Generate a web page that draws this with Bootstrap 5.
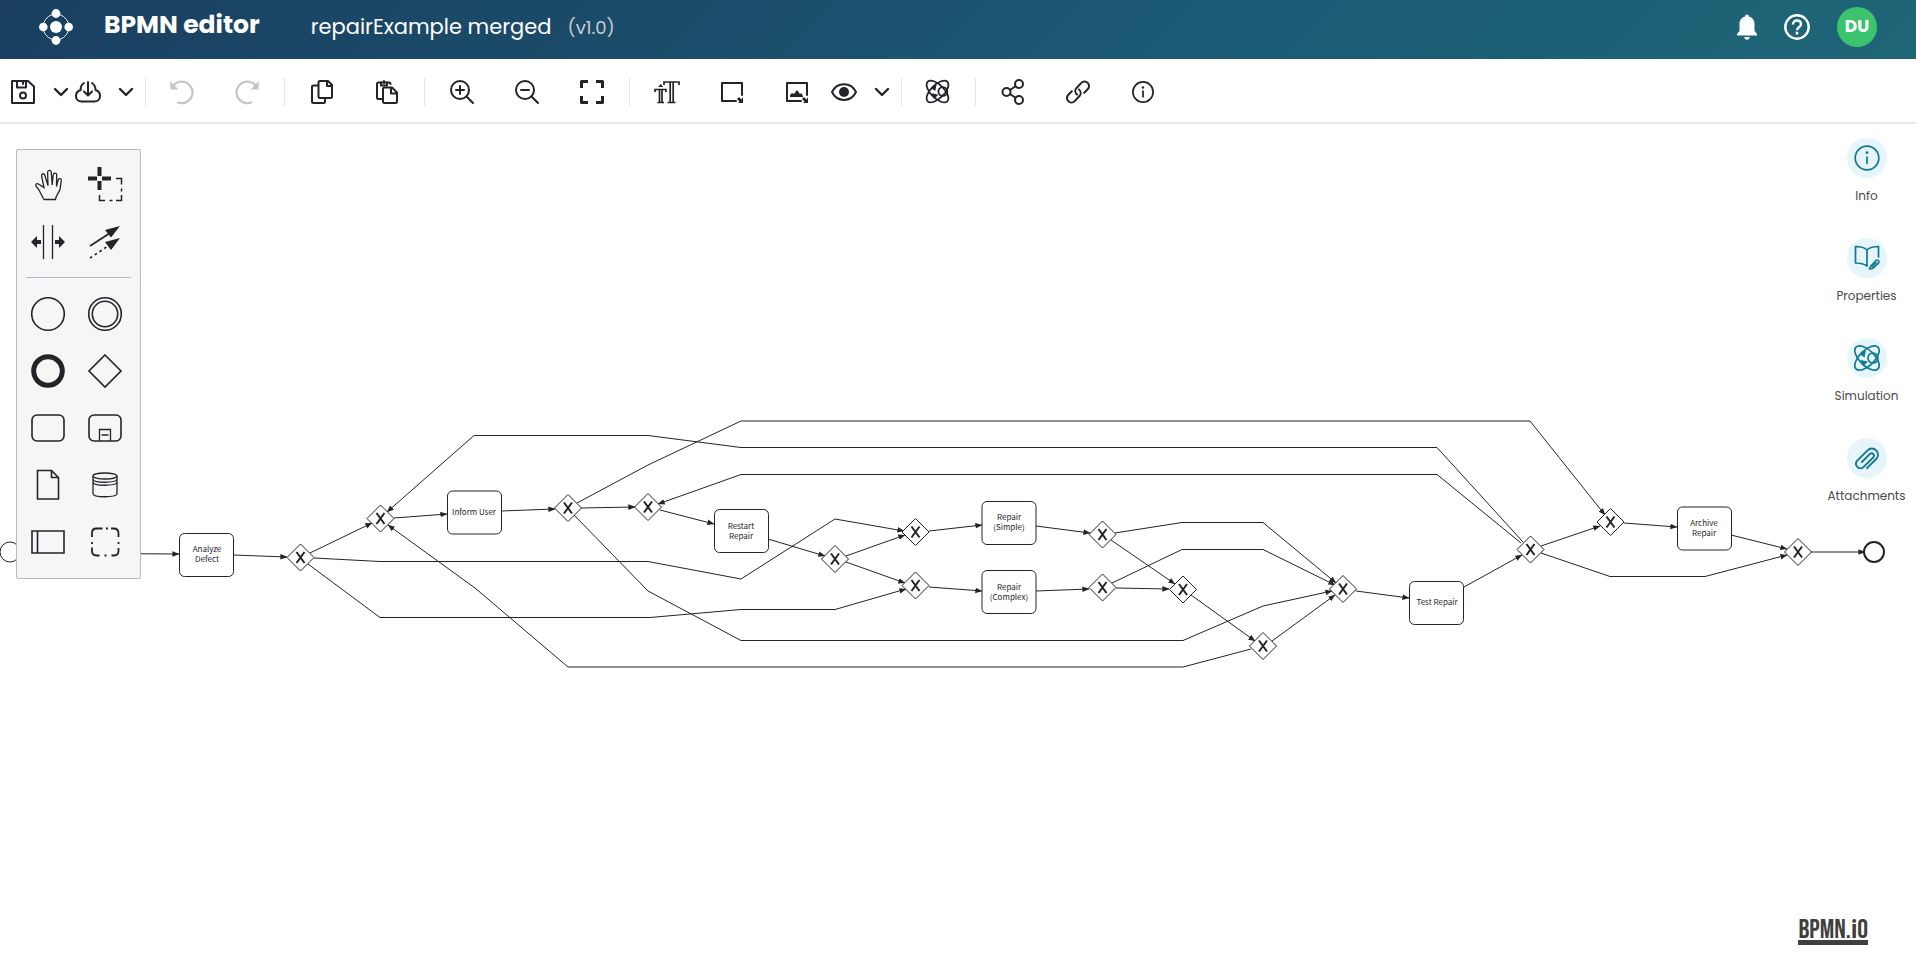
<!DOCTYPE html>
<html lang="en">
<head>
<meta charset="utf-8">
<meta name="viewport" content="width=device-width, initial-scale=1">
<title>BPMN editor</title>
<link href="https://cdn.jsdelivr.net/npm/bootstrap@5.3.0/dist/css/bootstrap.min.css" rel="stylesheet">
<style>
  :root { --ink: #22242a; --teal: #117893; --teal-soft: #e5f5f9; }
  body { font-family: Poppins, "Open Sans", sans-serif; color: var(--ink); background: #fff; }
  svg { display: block; }
  button svg, .brand-logo, .side-icon svg { fill: none; stroke: currentColor; stroke-width: 2; stroke-linecap: round; stroke-linejoin: round; }
  .side-icon svg { stroke-width: 1.7; }
  .solid { fill: currentColor; stroke: none; }

  .app-header { height: 59px; padding: 0 39px 5px; background: linear-gradient(135deg, #1a3f60 0%, #1b4c6a 33%, #1b5974 62%, #1f6677 100%); color: #fff; }
  .brand-name { font-size: 25px; line-height: 32px; font-weight: 700; margin: 0 51px 5px 31px; }
  .doc-name { font-size: 21px; line-height: 32px; }
  .doc-version { font-size: 18px; color: #c5ccd2; margin-left: 16px; }
  .plain-btn { border: 0; background: none; color: inherit; padding: 0; }
  .avatar { width: 40px; height: 40px; background: #3bc36d; color: #fff; font-size: 17px; font-weight: 700; margin-left: 26px; }

  .toolbar { height: 65px; padding: 2px 0 0 8px; border-bottom: 2px solid #e9e9ea; }
  .tool { width: 65px; height: 48px; display: flex; align-items: center; justify-content: center; }
  .split { margin-left: 2px; gap: 13px; }
  .split button { width: 26px; height: 48px; display: flex; align-items: center; justify-content: center; }
  .split button + button { width: 24px; }
  .tool-sep { width: 1px; height: 28px; background: #e3e4e6; margin: 0 4px 0 5px; }
  .split + .tool-sep { margin: 0 3px 0 7px; }
  button:disabled { color: #c4c4c5; }

  .canvas { overflow: hidden; min-height: 600px; }
  .diagram { width: 100%; height: 100%; position: absolute; inset: 0; }
  .flow { fill: none; stroke: var(--ink); stroke-width: 1; marker-end: url(#arrow); }
  .task rect { fill: #fff; stroke: var(--ink); stroke-width: 1; }
  .task text { font: 8px "Noto Sans CJK SC", "Noto Sans", sans-serif; text-anchor: middle; fill: var(--ink); }

  .palette { position: absolute; left: 16px; top: 25px; width: 125px; padding: 6px 7px 8px 2px; background: #f6f6f7; border: 1px solid #b8b9cb; border-radius: 2px; }
  .palette-grid { display: grid; grid-template-columns: 1fr 1fr; }
  .palette-grid button { height: 57px; display: flex; align-items: center; justify-content: center; }
  .palette-grid svg { stroke-width: 1.3; stroke-linecap: butt; stroke-linejoin: miter; }
  .palette-sep { height: 1px; background: #b8b9cb; margin: 7px 2px 7px 7px; }

  .side-panel { position: absolute; right: 0; top: 14px; width: 99px; gap: 32px; }
  .side-item { color: #4a4a4a; font-size: 12px; line-height: 20px; height: 68px; text-decoration: none; }
  .side-icon { width: 40px; height: 40px; background: var(--teal-soft); color: var(--teal); margin-bottom: 8px; }
  .bpmn-logo { position: absolute; right: 48px; bottom: 18px; color: #404040; font: 400 27px/20px "Bebas Neue", Oswald, "Roboto Condensed", "Liberation Sans", sans-serif; border-bottom: 5px solid #404040; text-decoration: none; }
  .bpmn-logo span { font-family: "Roboto Condensed", Oswald, "Liberation Sans", sans-serif; font-weight: 700; font-size: 25px; }
</style>
</head>
<body class="vh-100 d-flex flex-column">

<svg width="0" height="0" class="position-absolute" aria-hidden="true">
  <defs>
    <symbol id="i-chevron" viewBox="0 0 24 24"><path d="M6 9l6 6 6-6" stroke-width="2.4"/></symbol>
    <symbol id="i-sim" viewBox="0 0 28 28">
      <ellipse cx="14" cy="14" rx="15.500" ry="7.500" transform="rotate(45 14 14)"/>
      <ellipse cx="14" cy="14" rx="15.500" ry="7.500" transform="rotate(-45 14 14)"/>
      <circle cx="20" cy="14" r="5"/>
      <path class="solid" d="M13 6l-1.500 7.500-5-3.500zM7.500 16l7.500 1.500-5 5z"/>
    </symbol>
    <symbol id="i-info" viewBox="0 0 28 28"><circle cx="14" cy="14" r="11.800"/><path d="M14 13v6.500"/><circle class="solid" cx="14" cy="8.700" r="1.400"/></symbol>
  </defs>
</svg>

<header class="app-header d-flex align-items-center flex-shrink-0">
  <svg class="brand-logo" width="34" height="36" viewBox="0 0 34 36" aria-hidden="true">
    <circle cx="17" cy="18" r="13" stroke-width=".9" stroke-dasharray="16 4.400"/>
    <g class="solid"><circle cx="17" cy="18" r="6"/><circle cx="17" cy="4.500" r="4.400"/><circle cx="17" cy="31.500" r="4.400"/><circle cx="4.300" cy="18" r="4.300"/><circle cx="29.700" cy="18" r="4.300"/></g>
  </svg>
  <h1 class="brand-name">BPMN editor</h1>
  <span class="doc-name">repairExample merged</span>
  <span class="doc-version">(v1.0)</span>
  <button class="plain-btn ms-auto" aria-label="Notifications">
    <svg width="24" height="28" viewBox="0 0 24 28"><path class="solid" d="M12 1.500c1.200 0 1.900.8 1.900 2 3.600.9 5.600 3.700 5.600 7.500v7l2.500 3v1.500H2V21l2.500-3v-7c0-3.800 2-6.600 5.600-7.500 0-1.200.7-2 1.900-2zM9.300 24h5.400c0 1.600-1.100 2.700-2.700 2.700S9.300 25.600 9.300 24z"/></svg>
  </button>
  <button class="plain-btn ms-4" aria-label="Help">
    <svg width="28" height="28" viewBox="0 0 28 28"><circle cx="14" cy="14" r="11.700" stroke-width="2.400"/><path d="M10 11.500c0-2.400 1.700-4 4-4s4 1.500 4 3.700c0 3-4 3-4 6" stroke-width="2.400" stroke-linecap="butt"/><path class="solid" d="M12.700 18.800h2.600v2.600h-2.600z"/></svg>
  </button>
  <button class="plain-btn avatar rounded-circle" aria-label="Account">DU</button>
</header>

<nav class="toolbar d-flex align-items-center flex-shrink-0" aria-label="Editor tools">
  <div class="split d-flex">
    <button class="plain-btn" aria-label="Save"><svg width="26" height="26" viewBox="0 0 26 26"><path d="M3 2h15l6 5.500V24H2V2z"/><path d="M7 2v6.500h9V2M13 2v3"/><circle cx="13" cy="16.500" r="3"/></svg></button>
    <button class="plain-btn" aria-label="Save options"><svg width="24" height="24"><use href="#i-chevron"/></svg></button>
  </div>
  <div class="split d-flex">
    <button class="plain-btn" aria-label="Download"><svg width="26" height="26" viewBox="0 0 26 26"><path d="M9 4C6.500 5.500 5.500 8 5.700 11 2.500 12 1 14.500 1 17c0 3.500 2.500 5.500 5.500 5.500h13c3 0 5.500-2 5.500-5.500 0-3-2-5.200-4.500-6 0-3-1-5.500-3.500-7M13 3v13M9 12.500l4 4 4-4"/></svg></button>
    <button class="plain-btn" aria-label="Download options"><svg width="24" height="24"><use href="#i-chevron"/></svg></button>
  </div>
  <div class="tool-sep"></div>
  <button class="plain-btn tool" aria-label="Undo" disabled><svg width="26" height="26" viewBox="0 0 26 26"><path d="M4 7a10.800 10.800 0 1 1 5 16.500" stroke-width="2.200"/><path class="solid" d="M1 2l.5 8.500H9.500z"/></svg></button>
  <button class="plain-btn tool" aria-label="Redo" disabled><svg width="26" height="26" viewBox="0 0 26 26"><path d="M22 7a10.800 10.800 0 1 0-5 16.500" stroke-width="2.200"/><path class="solid" d="M25 2l-.5 8.500H16.500z"/></svg></button>
  <div class="tool-sep"></div>
  <button class="plain-btn tool" aria-label="Copy"><svg width="24" height="26" viewBox="0 0 24 26"><path d="M10 2h8l4 4v11.500q0 1.500-1.500 1.500H10q-1.500 0-1.500-1.500v-14Q8.500 2 10 2zM17 2v5h5"/><path d="M8 6.500H3.500Q2 6.500 2 8v14.500Q2 24 3.500 24h10q1.500 0 1.500-1.500V20"/></svg></button>
  <button class="plain-btn tool" aria-label="Paste"><svg width="24" height="26" viewBox="0 0 24 26"><path d="M8 20H3.500Q2 20 2 18.500V5q0-1.500 1.500-1.500H14Q15.500 3.500 15.500 5"/><path d="M6 3.500V6.500h6V3.500M9 2v2"/><path d="M9.500 8.500h7.500l5 5v9q0 1.500-1.500 1.500h-11Q8 24 8 22.500V10q0-1.500 1.500-1.500zM16 9v5.500h6"/></svg></button>
  <div class="tool-sep"></div>
  <button class="plain-btn tool" aria-label="Zoom in"><svg width="26" height="26" viewBox="0 0 26 26"><circle cx="11" cy="11" r="9"/><path d="M17.500 17.500l6.500 6.500M11 7v8M7 11h8"/></svg></button>
  <button class="plain-btn tool" aria-label="Zoom out"><svg width="26" height="26" viewBox="0 0 26 26"><circle cx="11" cy="11" r="9"/><path d="M17.500 17.500l6.500 6.500M7 11h8"/></svg></button>
  <button class="plain-btn tool" aria-label="Fit to screen"><svg width="26" height="26" viewBox="0 0 26 26"><path d="M2.500 9v-6.500H9M17 2.500h6.500V9M23.500 17v6.500H17M9 23.500H2.500V17" stroke-width="3" stroke-linecap="butt"/></svg></button>
  <div class="tool-sep"></div>
  <button class="plain-btn tool" aria-label="Font size"><svg width="28" height="26" viewBox="0 0 28 26"><g stroke-width="1.700" stroke-linecap="butt" stroke-linejoin="miter"><path d="M11 6V3h15v3M17.200 3v20M20.200 3v20M14.500 23.500h8"/><path d="M2 13v-2.500h11V13M6.500 10.500v13M9 10.500v13M4.500 23.500h6.500"/></g><path class="solid" d="M7.700 5l2.500 3h-5z"/></svg></button>
  <button class="plain-btn tool" aria-label="Box colour"><svg width="26" height="26" viewBox="0 0 26 26"><path d="M17 22H3V4h20v12"/><path class="solid" d="M24 18v6h-5l1.500-1.500L18 20l2-2 2.500 2.500z"/></svg></button>
  <button class="plain-btn tool" aria-label="Box image"><svg width="26" height="26" viewBox="0 0 26 26"><path d="M17 22H3V4h20v12"/><path class="solid" d="M24 18v6h-5l1.500-1.500L18 20l2-2 2.500 2.500zM6 18v-2l2-2 2 1 3-4 3 4 1-1 2 3v1z"/></svg></button>
  <div class="split d-flex">
    <button class="plain-btn" aria-label="View"><svg width="26" height="26" viewBox="0 0 26 26"><path d="M1 13C6 2.500 20 2.500 25 13 20 23.500 6 23.500 1 13z"/><circle class="solid" cx="13" cy="13" r="5"/></svg></button>
    <button class="plain-btn" aria-label="View options"><svg width="24" height="24"><use href="#i-chevron"/></svg></button>
  </div>
  <div class="tool-sep"></div>
  <button class="plain-btn tool" aria-label="Simulate"><svg width="25" height="25"><use href="#i-sim"/></svg></button>
  <div class="tool-sep"></div>
  <button class="plain-btn tool" aria-label="Share"><svg width="24" height="26" viewBox="0 0 24 26"><circle cx="5.500" cy="13" r="4"/><circle cx="18" cy="5" r="4"/><circle cx="18" cy="21" r="4"/><path d="M9 11l5.500-3.800M9 15l5.500 3.800"/></svg></button>
  <button class="plain-btn tool" aria-label="Link"><svg width="24" height="24" viewBox="0 0 24 24"><path d="M11 14.500a4.500 4.500 0 0 1-.7-6.300l5-5.300a4.500 4.500 0 0 1 6.400 6.400l-3.500 3.500"/><path d="M13 9.500a4.500 4.500 0 0 1 .7 6.300l-5 5.300a4.500 4.500 0 0 1-6.400-6.400l3.500-3.500"/></svg></button>
  <button class="plain-btn tool" aria-label="Information"><svg width="24" height="24"><use href="#i-info"/></svg></button>
</nav>

<main class="canvas position-relative flex-fill">
  <svg class="diagram" role="img" aria-label="Repair process">
    <defs>
      <marker id="arrow" viewBox="0 0 10 10" refX="9.500" refY="5" markerWidth="7" markerHeight="7" orient="auto"><path d="M0 1L10 5 0 9z" fill="#22242a"/></marker>
      <g id="gate"><path d="M0-13.500L13.500 0 0 13.500-13.500 0z" fill="#fff" stroke="#22242a"/><path d="M-4-5.500L4 5.500M4-5.500L-4 5.500" stroke="#22242a" stroke-width="2"/></g>
    </defs>
    <g transform="translate(0 -124)">
      <g>
        <path class="flow" d="M20 553L179 554"/>
        <path class="flow" d="M233 555L287 557"/>
        <path class="flow" d="M310 553L372 523"/>
        <path class="flow" d="M314 558L380 561.500H648L741 579 835 519 904 531"/>
        <path class="flow" d="M308 564L380 617.500H650L741 609.500H835L906 589"/>
        <path class="flow" d="M394 518L447 514"/>
        <path class="flow" d="M501 511L555 509"/>
        <path class="flow" d="M1523 542L1437 447.500H741L648 435.500H474L387 512"/>
        <path class="flow" d="M577 503L648 465 741 421H1530L1605 515"/>
        <path class="flow" d="M581 508L635 507"/>
        <path class="flow" d="M1521 543L1437 474.500H741L658 504"/>
        <path class="flow" d="M660 510L714 524"/>
        <path class="flow" d="M768 539L825 556"/>
        <path class="flow" d="M846 556L905 535"/>
        <path class="flow" d="M846 562L905 583"/>
        <path class="flow" d="M929 531L982 525"/>
        <path class="flow" d="M929 587L982 591"/>
        <path class="flow" d="M1036 526L1090 533"/>
        <path class="flow" d="M1036 591L1089 589"/>
        <path class="flow" d="M1115 533L1182 522.500H1263L1336 583"/>
        <path class="flow" d="M1111 540L1175 584"/>
        <path class="flow" d="M1112 583L1182 549.500H1263L1335 585"/>
        <path class="flow" d="M1116 588L1169 589"/>
        <path class="flow" d="M1191 595L1255 641"/>
        <path class="flow" d="M574 515L648 591 741 640.500H1183L1263 606 1332 591"/>
        <path class="flow" d="M1251 649L1183 667H568L475 588 388 525"/>
        <path class="flow" d="M1272 641L1335 595"/>
        <path class="flow" d="M1356 591L1409 598"/>
        <path class="flow" d="M1464 587L1522 555"/>
        <path class="flow" d="M1541 546L1600 526"/>
        <path class="flow" d="M1541 553L1610 576.500H1705L1787 555"/>
        <path class="flow" d="M1624 523L1677 527"/>
        <path class="flow" d="M1731 535L1787 549"/>
        <path class="flow" d="M1811 552H1865"/>
      </g>
      <circle cx="10" cy="552" r="10" fill="#fff" stroke="#22242a"/>
      <circle cx="1874" cy="552" r="10" fill="#fff" stroke="#22242a" stroke-width="2"/>
      <use href="#gate" x="300.500" y="557.500"/><use href="#gate" x="380.500" y="518.500"/><use href="#gate" x="568" y="508"/>
      <use href="#gate" x="648" y="507"/><use href="#gate" x="835" y="559"/><use href="#gate" x="915.500" y="532"/>
      <use href="#gate" x="915.500" y="585.500"/><use href="#gate" x="1102.500" y="534.500"/><use href="#gate" x="1102.500" y="587.500"/>
      <use href="#gate" x="1183" y="589.500"/><use href="#gate" x="1263" y="646"/><use href="#gate" x="1343" y="589"/>
      <use href="#gate" x="1530.500" y="549.500"/><use href="#gate" x="1610.500" y="522"/><use href="#gate" x="1798" y="552"/>
      <g class="task"><rect x="179.500" y="533.500" width="54" height="43" rx="5"/><text x="207" y="552">Analyze</text><text x="207" y="562">Defect</text></g>
      <g class="task"><rect x="447.500" y="491" width="54" height="43" rx="5"/><text x="474" y="515">Inform User</text></g>
      <g class="task"><rect x="714.500" y="509.500" width="54" height="43" rx="5"/><text x="741" y="529">Restart</text><text x="741" y="539">Repair</text></g>
      <g class="task"><rect x="982" y="501.500" width="54" height="43" rx="5"/><text x="1009" y="520">Repair</text><text x="1009" y="530">(Simple)</text></g>
      <g class="task"><rect x="982" y="570.500" width="54" height="43" rx="5"/><text x="1009" y="590">Repair</text><text x="1009" y="600">(Complex)</text></g>
      <g class="task"><rect x="1409.500" y="581.500" width="54" height="43" rx="5"/><text x="1437" y="605">Test Repair</text></g>
      <g class="task"><rect x="1677.500" y="507" width="54" height="43" rx="5"/><text x="1704" y="526">Archive</text><text x="1704" y="536">Repair</text></g>
    </g>
  </svg>

  <aside class="palette" aria-label="Shape palette">
    <div class="palette-grid">
      <button class="plain-btn" aria-label="Hand tool"><svg width="36" height="36" viewBox="0 0 36 36"><path d="M14 32.500h11.500c.3-4 3-6 4.500-10l1.300-9c.2-2-2.600-2.600-3.200-.5l-1.600 6.500.2-11.500c0-2.400-3.200-2.400-3.500 0l-1 10-1-13c-.3-2.400-3.600-2.200-3.600.2l.4 13.300-3.300-10.500c-.8-2.200-3.600-1.300-3.100 1l2.400 11.500-5.500-3.500c-2-1.200-3.600.8-2.200 2.500 3.700 3.500 4.700 8.500 7.700 13z"/></svg></button>
      <button class="plain-btn" aria-label="Lasso tool"><svg width="36" height="36" viewBox="0 0 36 36"><path d="M12.500 0v9M12.500 14v9M1 11.500h9M15 11.500h9" stroke-width="4"/><path d="M29 11.500h5.500v6M34.500 21.500v3M34.500 28v5.500H29M25.500 33.500h-3M18 33.500h-5.500V28" stroke-width="1.500"/></svg></button>
      <button class="plain-btn" aria-label="Space tool"><svg width="36" height="36" viewBox="0 0 36 36"><path d="M13.500 1v34M22.500 1v34"/><path class="solid" d="M1 18l6-6v4h4v4H7v4zM35 18l-6-6v4h-4v4h4v4z"/></svg></button>
      <button class="plain-btn" aria-label="Connect tool"><svg width="36" height="36" viewBox="0 0 36 36"><path d="M3 22l20-13" stroke-width="1.700"/><path d="M3 34l18-12" stroke-width="1.700" stroke-dasharray="2.500 3.200"/><path class="solid" d="M33 2L18 6l6 7.500zM33 14l-15 4 6 8z"/></svg></button>
    </div>
    <div class="palette-sep"></div>
    <div class="palette-grid">
      <button class="plain-btn" aria-label="Start event"><svg width="36" height="36" viewBox="0 0 36 36"><circle cx="18" cy="18" r="16.300" stroke-width="1.600"/></svg></button>
      <button class="plain-btn" aria-label="Intermediate event"><svg width="36" height="36" viewBox="0 0 36 36"><circle cx="18" cy="18" r="16.300" stroke-width="1.600"/><circle cx="18" cy="18" r="12.700" stroke-width="1.600"/></svg></button>
      <button class="plain-btn" aria-label="End event"><svg width="36" height="36" viewBox="0 0 36 36"><circle cx="18" cy="18" r="14.300" stroke-width="5"/></svg></button>
      <button class="plain-btn" aria-label="Gateway"><svg width="36" height="36" viewBox="0 0 36 36"><path d="M18 2l16 16-16 16L2 18z" stroke-width="1.600"/></svg></button>
      <button class="plain-btn" aria-label="Task"><svg width="36" height="36" viewBox="0 0 36 36"><rect x="2" y="5" width="32" height="26" rx="5" stroke-width="1.600"/></svg></button>
      <button class="plain-btn" aria-label="Sub-process"><svg width="36" height="36" viewBox="0 0 36 36"><rect x="2" y="5" width="32" height="26" rx="5" stroke-width="1.600"/><path d="M12.500 31V19.500h11V31M14.500 25h7"/></svg></button>
      <button class="plain-btn" aria-label="Data object"><svg width="36" height="36" viewBox="0 0 36 36"><path d="M7.500 3.500h14l7 7v21.500h-21zM21.500 3.500v7h7" stroke-width="1.600"/></svg></button>
      <button class="plain-btn" aria-label="Data store"><svg width="36" height="36" viewBox="0 0 36 36"><ellipse cx="18" cy="9" rx="12" ry="3"/><path d="M6 9v17.500c0 4.300 24 4.300 24 0V9M6 12c0 4.300 24 4.300 24 0M6 15c0 4.300 24 4.300 24 0"/></svg></button>
      <button class="plain-btn" aria-label="Pool"><svg width="36" height="36" viewBox="0 0 36 36"><path d="M2 7h32v22H2zM7.500 7v22" stroke-width="1.600"/></svg></button>
      <button class="plain-btn" aria-label="Group"><svg width="36" height="36" viewBox="0 0 36 36"><g stroke-width="1.800"><path d="M5 13V9q0-4.500 4.500-4.500h6M24 4.500h2.500q5 0 5 5v3.500M31.500 24v3q0 4.500-4.500 4.500h-2.500M12.500 31.500H9.500Q5 31.500 5 27v-3.500M19 4.500h2M31.500 18v2M17.500 31.500h2M5 18v2"/></g></svg></button>
    </div>
  </aside>

  <nav class="side-panel d-flex flex-column" aria-label="Panels">
    <a href="#" class="side-item d-flex flex-column align-items-center"><span class="side-icon rounded-circle d-flex align-items-center justify-content-center"><svg width="28" height="28"><use href="#i-info"/></svg></span>Info</a>
    <a href="#" class="side-item d-flex flex-column align-items-center"><span class="side-icon rounded-circle d-flex align-items-center justify-content-center"><svg width="28" height="28" viewBox="0 0 28 28"><path d="M14 6C11 3 6 2.500 2.500 2.500V19c4.500 0 8 .5 11.500 3V6c3-3 8-3.500 11.500-3.500V13"/><path d="M17.500 22.500l5.500-6q1.500-1 2.500 0t0 2.500l-6 5.500-3 .5z"/><path d="M19 22.500l4-4"/></svg></span>Properties</a>
    <a href="#" class="side-item d-flex flex-column align-items-center"><span class="side-icon rounded-circle d-flex align-items-center justify-content-center"><svg width="28" height="28"><use href="#i-sim"/></svg></span>Simulation</a>
    <a href="#" class="side-item d-flex flex-column align-items-center"><span class="side-icon rounded-circle d-flex align-items-center justify-content-center"><svg width="26" height="26" viewBox="0 0 24 24"><path transform="matrix(0 1 1 0 0 0)" d="M21.400 12l-8.500 8.500a5.600 5.600 0 0 1-8-8l9.700-9.700a4.200 4.200 0 0 1 5.900 5.900l-9.200 9.200a2.200 2.200 0 0 1-3.100-3.100l7.500-7.500"/></svg></span>Attachments</a>
  </nav>
  <a href="#" class="bpmn-logo">BPMN.<span>i</span>O</a>
</main>

<script src="https://cdn.jsdelivr.net/npm/bootstrap@5.3.0/dist/js/bootstrap.bundle.min.js"></script>
</body>
</html>
